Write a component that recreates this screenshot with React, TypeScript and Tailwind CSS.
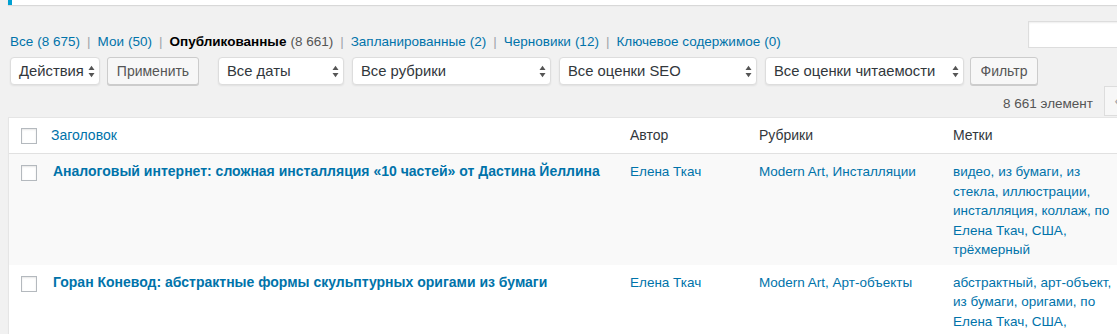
import React from 'react';

const font = "font-['Liberation_Sans',Arial,sans-serif]";

function Arrows() {
  return (
    <svg width="7" height="13" viewBox="0 0 7 13" className="shrink-0">
      <path d="M0.5 5 L3.5 0.8 L6.5 5 Z" fill="#555" />
      <path d="M0.5 8 L3.5 12.2 L6.5 8 Z" fill="#555" />
    </svg>
  );
}

function Select({ label, width }: { label: string; width: string }) {
  return (
    <div
      className={`${width} h-[28px] flex items-center justify-between pl-2 pr-[4px] bg-white border border-[#ddd] rounded-[4px] shadow-[0_1px_2px_rgba(0,0,0,0.07)] text-[14.8px] text-[#32373c]`}
    >
      <span className="whitespace-nowrap">{label}</span>
      <Arrows />
    </div>
  );
}

function Btn({ label, width }: { label: string; width: string }) {
  return (
    <div
      className={`${width} h-[28px] flex items-center justify-center bg-[#f7f7f7] border border-[#ccc] rounded-[3px] shadow-[0_1px_0_#ccc] text-[14px] text-[#555]`}
    >
      {label}
    </div>
  );
}

function Checkbox() {
  return <div className="w-4 h-4 bg-white border border-[#b4b9be] shadow-[inset_0_1px_2px_rgba(0,0,0,0.1)]" />;
}

const statuses = [
  { label: 'Все', count: '(8 675)' },
  { label: 'Мои', count: '(50)' },
  { label: 'Опубликованные', count: '(8 661)', current: true },
  { label: 'Запланированные', count: '(2)' },
  { label: 'Черновики', count: '(12)' },
  { label: 'Ключевое содержимое', count: '(0)' },
];

const posts = [
  {
    title: 'Аналоговый интернет: сложная инсталляция «10 частей» от Дастина Йеллина',
    author: 'Елена Ткач',
    cats: ['Modern Art', 'Инсталляции'],
    tags: ['видео', 'из бумаги', 'из стекла', 'иллюстрации', 'инсталляция', 'коллаж', 'по Елена Ткач', 'США', 'трёхмерный'],
  },
  {
    title: 'Горан Коневод: абстрактные формы скульптурных оригами из бумаги',
    author: 'Елена Ткач',
    cats: ['Modern Art', 'Арт-объекты'],
    tags: ['абстрактный', 'арт-объект', 'из бумаги', 'оригами', 'по Елена Ткач', 'США', 'трёхмерный'],
  },
];

const cols = 'grid grid-cols-[34px_577px_129px_194px_184px_1fr]';

export default function App() {
  return (
    <div className={`w-[1117px] h-[334px] overflow-hidden bg-[#f1f1f1] ${font} text-[13.5px] text-[#555]`}>
      <div className="w-[1190px] pl-2">
        {/* Notice */}
        <div className="h-[5px] bg-white border-l-4 border-[#00a0d2] shadow-[0_1px_1px_rgba(0,0,0,0.1)]" />

        {/* Status links + search */}
        <div className="flex items-start">
          <ul className="flex mt-[26px] leading-[21px] pl-[2px]">
            {statuses.map((s, i) => (
              <li key={s.label} className="flex">
                <span className={s.current ? 'font-bold text-black' : 'text-[#0073aa]'}>{s.label}</span>
                <span className={`ml-1 ${s.current ? 'text-[#555]' : 'text-[#0073aa]'}`}>{s.count}</span>
                {i < statuses.length - 1 && <span className="mx-[7px] text-[#a0a5aa]">|</span>}
              </li>
            ))}
          </ul>
          <div className="ml-auto mt-4 w-[162px] h-[27px] bg-white border border-[#ddd] shadow-[inset_0_1px_2px_rgba(0,0,0,0.07)]" />
        </div>

        {/* Filters */}
        <div className="flex items-center mt-[5px] pl-[2px]">
          <Select label="Действия" width="w-[90px]" />
          <div className="ml-[7px]"><Btn label="Применить" width="w-[92px]" /></div>
          <div className="ml-[19px]"><Select label="Все даты" width="w-[126px]" /></div>
          <div className="ml-2"><Select label="Все рубрики" width="w-[199px]" /></div>
          <div className="ml-2"><Select label="Все оценки SEO" width="w-[198px]" /></div>
          <div className="ml-2"><Select label="Все оценки читаемости" width="w-[199px]" /></div>
          <div className="ml-[6px]"><Btn label="Фильтр" width="w-[68px]" /></div>
        </div>

        {/* Count + pagination */}
        <div className="flex justify-end h-[30px] mt-px">
          <span className="pt-[8px] leading-[20px] text-[#555]">8 661 элемент</span>
          <div className="ml-[11px] w-[86px] flex">
            <div className="w-[30px] h-[30px] flex items-center justify-center border border-[#ddd] bg-[#f7f7f7] text-[#a0a5aa] text-[16px]">«</div>
          </div>
        </div>

        {/* Table */}
        <div className="mt-px border-t border-l border-[#e5e5e5] bg-white shadow-[0_1px_1px_rgba(0,0,0,0.04)]">
          <div className={`${cols} h-[36px] items-center border-b border-[#e1e1e1] text-[14px]`}>
            <div className="pl-3"><Checkbox /></div>
            <div className="pl-2 text-[#0073aa]">Заголовок</div>
            <div className="pl-[10px] text-[#32373c]">Автор</div>
            <div className="pl-[10px] text-[#32373c]">Рубрики</div>
            <div className="pl-[10px] text-[#32373c]">Метки</div>
            <div />
          </div>
          {posts.map((p, i) => (
            <div
              key={p.title}
              className={`${cols} pt-2 pb-[5px] leading-[19.5px] ${i % 2 === 0 ? 'bg-[#f9f9f9]' : 'bg-white'}`}
            >
              <div className="pl-3 pt-[3px]"><Checkbox /></div>
              <div className="pl-[10px] pr-[10px] text-[14px] font-bold text-[#0073aa]">{p.title}</div>
              <div className="pl-[10px] text-[#0073aa]">{p.author}</div>
              <div className="pl-[10px] text-[#0073aa]">
                {p.cats.map((c, j) => (
                  <React.Fragment key={c}>
                    <span>{c}</span>
                    {j < p.cats.length - 1 && ', '}
                  </React.Fragment>
                ))}
              </div>
              <div className="pl-[10px] pr-[10px] text-[#0073aa]">
                {p.tags.map((t, j) => (
                  <React.Fragment key={t}>
                    <span>{t}</span>
                    {j < p.tags.length - 1 && ', '}
                  </React.Fragment>
                ))}
              </div>
              <div />
            </div>
          ))}
        </div>
      </div>
    </div>
  );
}
